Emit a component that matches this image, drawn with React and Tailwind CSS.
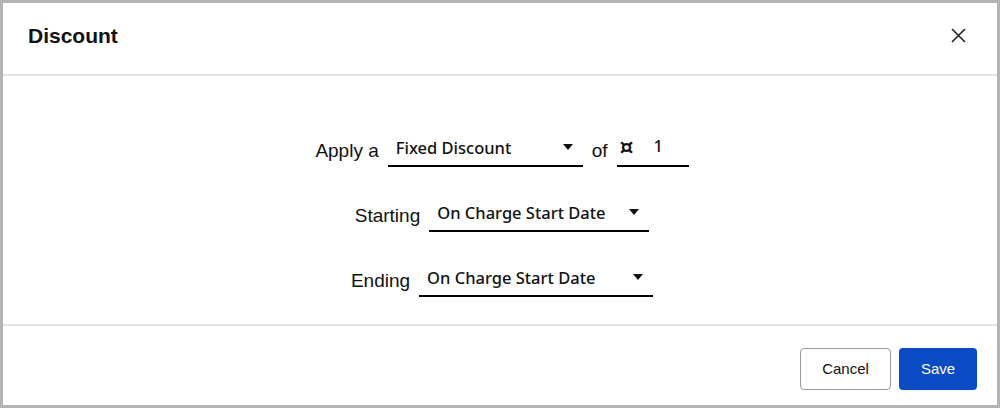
const SelectField = ({ value, width }) => (
  <div
    className={`${width} h-9 flex items-center justify-between pl-2 pr-[8px] border-b-2 border-black`}
  >
    <span className="text-[16.5px] font-medium text-[#111] font-['Noto_Sans',sans-serif] leading-none">
      {value}
    </span>
    <svg width="10" height="6" viewBox="0 0 10 6" className="mr-[2px] -mt-[2px]">
      <path d="M0 0h10L5 6z" fill="#111" />
    </svg>
  </div>
)

const Row = ({ children }) => (
  <div className="flex items-end gap-[9px] h-9">{children}</div>
)

const Label = ({ children }) => (
  <span className="text-[19px] text-[#111] font-['Liberation_Sans',Arial,sans-serif] leading-none pb-[7px]">
    {children}
  </span>
)

export default function App() {
  return (
    <div className="w-[1000px] h-[408px] border-[3px] border-[#b4b4b4] bg-white flex flex-col font-['Liberation_Sans',Arial,sans-serif]">
      {/* Header */}
      <div className="h-[73px] shrink-0 flex items-center justify-between pl-[25px] pr-[31px] pb-[6px] border-b-2 border-[#e2e2e2]">
        <h2 className="text-[21px] font-bold text-[#111]">Discount</h2>
        <svg width="15" height="15" viewBox="0 0 15 15">
          <path d="M1 1l13 13M14 1L1 14" stroke="#222" strokeWidth="1.6" fill="none" />
        </svg>
      </div>

      {/* Body */}
      <div className="h-[250px] shrink-0 flex flex-col items-center gap-[29px] pt-[55px] pl-[4px] border-b-2 border-[#e2e2e2]">
        <Row>
          <Label>Apply a</Label>
          <SelectField value="Fixed Discount" width="w-[195px]" />
          <Label>of</Label>
          <div className="w-[72px] h-9 flex items-center border-b-2 border-black pl-[3px]">
            <span className="text-[22px] font-bold text-[#111] font-['DejaVu_Sans',sans-serif] leading-none -mt-[2px]">¤</span>
            <span className="ml-[20px] text-[16.5px] font-medium text-[#111] font-['Noto_Sans',sans-serif] leading-none -mt-[3px]">1</span>
          </div>
        </Row>
        <Row>
          <Label>Starting</Label>
          <SelectField value="On Charge Start Date" width="w-[220px]" />
        </Row>
        <Row>
          <Label>Ending</Label>
          <SelectField value="On Charge Start Date" width="w-[234px]" />
        </Row>
      </div>

      {/* Footer */}
      <div className="flex-1 flex items-start justify-end gap-2 pt-[22px] pr-[20px]">
        <button className="w-[91px] h-[42px] rounded-[4px] border border-[#9a9a9a] bg-white text-[15px] text-[#111]">
          Cancel
        </button>
        <button className="w-[78px] h-[42px] rounded-[4px] bg-[#0a4bc4] text-[15px] text-white">
          Save
        </button>
      </div>
    </div>
  )
}
